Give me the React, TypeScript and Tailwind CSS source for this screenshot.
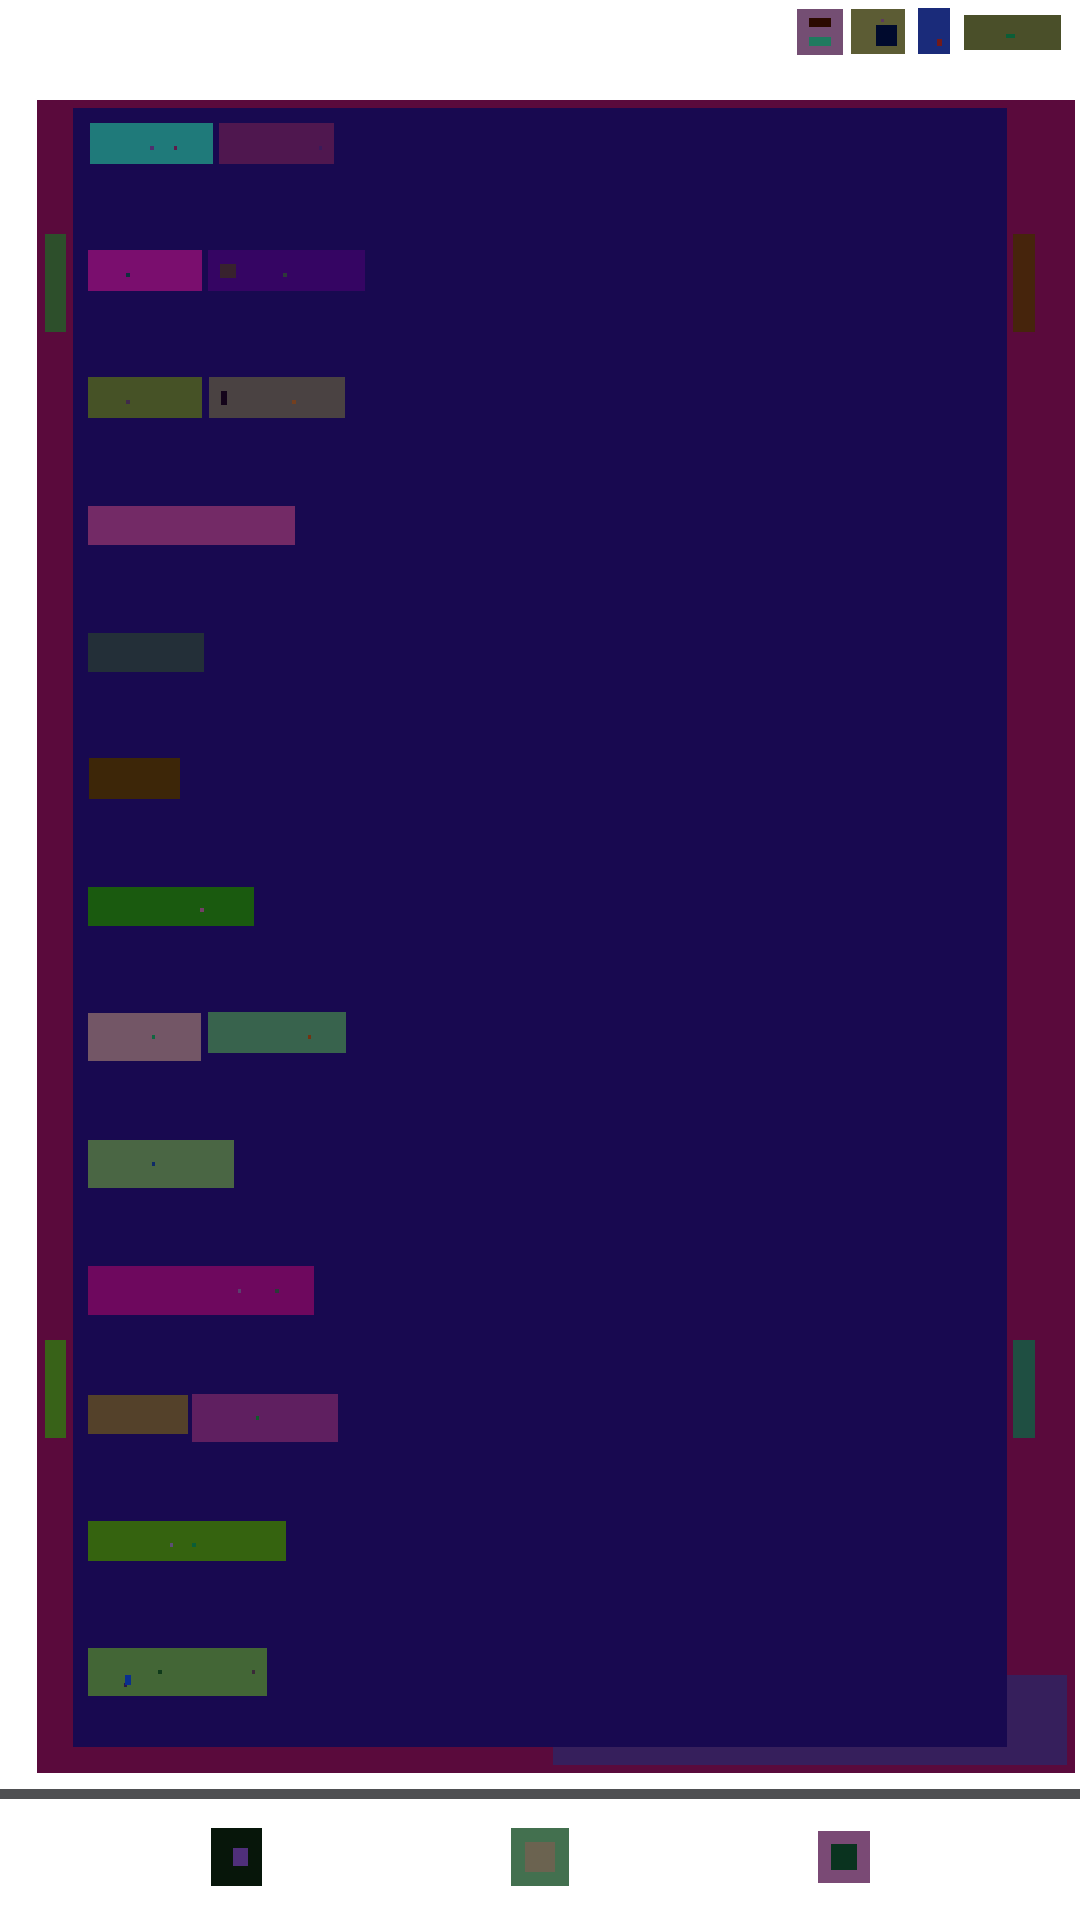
import type { ReactNode } from "react";

type BoxProps = {
  className: string;
  children?: ReactNode;
};

// a flat colour block, dots and inner blocks sit on top of it
const Box = ({ className, children }: BoxProps) => (
  <div className={`relative shrink-0 ${className}`}>{children}</div>
);

const Dot = ({ className }: { className: string }) => (
  <span className={`absolute ${className}`} />
);

const Header = () => (
  <header className="h-[100px] shrink-0 flex items-start pl-[797px]">
    <Box className="mt-[9px] w-[46px] h-[46px] bg-[#744e73]">
      <Dot className="left-[12px] top-[9px] w-[22px] h-[9px] bg-[#2b0a00]" />
      <Dot className="left-[12px] top-[28px] w-[22px] h-[9px] bg-[#1f7a5f]" />
    </Box>
    <Box className="ml-[8px] mt-[9px] w-[54px] h-[45px] bg-[#5c5c34]">
      <Dot className="left-[30px] top-[10px] w-[3px] h-[3px] bg-[#5c3a5e]" />
      <Dot className="left-[25px] top-[16px] w-[21px] h-[21px] bg-[#000a2d]" />
    </Box>
    <Box className="ml-[13px] mt-[8px] w-[32px] h-[46px] bg-[#1a2b7a]">
      <Dot className="left-[19px] top-[31px] w-[5px] h-[7px] bg-[#731a1a]" />
    </Box>
    <Box className="ml-[14px] mt-[15px] w-[97px] h-[35px] bg-[#4a4f29]">
      <Dot className="left-[42px] top-[19px] w-[9px] h-[4px] bg-[#0b5e37]" />
    </Box>
  </header>
);

const Rail = ({ top, bottom, width }: { top: string; bottom: string; width: string }) => (
  <div className={`flex flex-col pt-[134px] gap-[1008px] ${width}`}>
    <div className={`h-[98px] ${top}`} />
    <div className={`h-[98px] ${bottom}`} />
  </div>
);

const Panel = () => (
  <section className="relative z-10 w-[934px] h-[1639px] mt-[8px] shrink-0 bg-[#180950] pl-[15px] flex flex-col">
    <div className="h-[127px] flex items-start">
      <Box className="ml-[2px] mt-[15px] w-[123px] h-[41px] bg-[#1f7a7a]">
        <Dot className="left-[60px] top-[23px] w-[4px] h-[4px] bg-[#4f2f6e]" />
        <Dot className="left-[84px] top-[23px] w-[3px] h-[4px] bg-[#5e1a4a]" />
      </Box>
      <Box className="ml-[6px] mt-[15px] w-[115px] h-[41px] bg-[#4f174f]">
        <Dot className="left-[100px] top-[23px] w-[3px] h-[4px] bg-[#3a1a5a]" />
      </Box>
    </div>
    <div className="h-[127px] flex items-start">
      <Box className="mt-[15px] w-[114px] h-[41px] bg-[#7a0e6e]">
        <Dot className="left-[38px] top-[23px] w-[4px] h-[4px] bg-[#0f2f3f]" />
      </Box>
      <Box className="ml-[6px] mt-[15px] w-[157px] h-[41px] bg-[#350563]">
        <Dot className="left-[12px] top-[14px] w-[16px] h-[14px] bg-[#38222e]" />
        <Dot className="left-[75px] top-[23px] w-[4px] h-[4px] bg-[#2e3a3a]" />
      </Box>
    </div>
    <div className="h-[129px] flex items-start">
      <Box className="mt-[15px] w-[114px] h-[41px] bg-[#465226]">
        <Dot className="left-[38px] top-[23px] w-[4px] h-[4px] bg-[#3f2a4a]" />
      </Box>
      <Box className="ml-[7px] mt-[15px] w-[136px] h-[41px] bg-[#4a4242]">
        <Dot className="left-[12px] top-[14px] w-[6px] h-[14px] bg-[#14041a]" />
        <Dot className="left-[83px] top-[23px] w-[4px] h-[4px] bg-[#733f1f]" />
      </Box>
    </div>
    <div className="h-[127px] flex items-start">
      <Box className="mt-[15px] w-[207px] h-[39px] bg-[#732a66]" />
    </div>
    <div className="h-[125px] flex items-start">
      <Box className="mt-[15px] w-[116px] h-[39px] bg-[#232f38]" />
    </div>
    <div className="h-[129px] flex items-start">
      <Box className="ml-[1px] mt-[15px] w-[91px] h-[41px] bg-[#3d2608]" />
    </div>
    <div className="h-[125px] flex items-start">
      <Box className="mt-[15px] w-[166px] h-[39px] bg-[#1a5a0f]">
        <Dot className="left-[112px] top-[21px] w-[4px] h-[4px] bg-[#733f66]" />
      </Box>
    </div>
    <div className="h-[128px] flex items-start">
      <Box className="mt-[16px] w-[113px] h-[48px] bg-[#735666]">
        <Dot className="left-[64px] top-[22px] w-[3px] h-[4px] bg-[#0f6640]" />
      </Box>
      <Box className="ml-[7px] mt-[15px] w-[138px] h-[41px] bg-[#38634d]">
        <Dot className="left-[100px] top-[23px] w-[3px] h-[4px] bg-[#733311]" />
      </Box>
    </div>
    <div className="h-[126px] flex items-start">
      <Box className="mt-[15px] w-[146px] h-[48px] bg-[#4a6644]">
        <Dot className="left-[64px] top-[22px] w-[3px] h-[4px] bg-[#0f2a66]" />
      </Box>
    </div>
    <div className="h-[128px] flex items-start">
      <Box className="mt-[15px] w-[226px] h-[49px] bg-[#6e085e]">
        <Dot className="left-[150px] top-[23px] w-[3px] h-[4px] bg-[#5c3f6e]" />
        <Dot className="left-[187px] top-[23px] w-[4px] h-[4px] bg-[#2a3a38]" />
      </Box>
    </div>
    <div className="h-[127px] flex items-start">
      <Box className="mt-[16px] w-[100px] h-[39px] bg-[#54412a]" />
      <Box className="ml-[4px] mt-[15px] w-[146px] h-[48px] bg-[#5f1f60]">
        <Dot className="left-[64px] top-[22px] w-[3px] h-[4px] bg-[#0f5a2a]" />
      </Box>
    </div>
    <div className="h-[127px] flex items-start">
      <Box className="mt-[15px] w-[198px] h-[40px] bg-[#35630f]">
        <Dot className="left-[82px] top-[22px] w-[3px] h-[4px] bg-[#5c4f73]" />
        <Dot className="left-[104px] top-[22px] w-[4px] h-[4px] bg-[#0a5e37]" />
      </Box>
    </div>
    <div className="flex items-start">
      <Box className="mt-[15px] w-[179px] h-[48px] bg-[#436636]">
        <Dot className="left-[36px] top-[35px] w-[3px] h-[4px] bg-[#2a1a4a]" />
        <Dot className="left-[37px] top-[27px] w-[6px] h-[10px] bg-[#0a2f8f]" />
        <Dot className="left-[70px] top-[22px] w-[4px] h-[4px] bg-[#0f3a1a]" />
        <Dot className="left-[164px] top-[22px] w-[3px] h-[4px] bg-[#3a2a38]" />
      </Box>
    </div>
  </section>
);

const Footer = () => (
  <footer className="flex-1 flex items-start mt-[29px]">
    <Box className="ml-[211px] w-[51px] h-[58px] bg-[#07160a]">
      <Dot className="left-[22px] top-[20px] w-[15px] h-[18px] bg-[#4f2f7a]" />
    </Box>
    <Box className="ml-[249px] w-[58px] h-[58px] bg-[#43704f]">
      <Dot className="left-[14px] top-[14px] w-[30px] h-[30px] bg-[#6b6350]" />
    </Box>
    <Box className="ml-[249px] mt-[3px] w-[52px] h-[52px] bg-[#7a4a75]">
      <Dot className="left-[13px] top-[13px] w-[26px] h-[26px] bg-[#0a331f]" />
    </Box>
  </footer>
);

export default function App() {
  return (
    <div className="w-[1080px] h-[1920px] bg-white flex flex-col overflow-hidden">
      <Header />
      <main className="relative ml-[37px] w-[1038px] h-[1673px] shrink-0 bg-[#5a0a3c] flex">
        <Rail width="w-[36px] pl-[8px] [&>div]:w-[21px]" top="bg-[#2d4f2b]" bottom="bg-[#386218]" />
        <Panel />
        <Rail width="w-[68px] pl-[6px] [&>div]:w-[22px]" top="bg-[#46240c]" bottom="bg-[#1f4f42]" />
        <div className="absolute left-[516px] top-[1575px] w-[514px] h-[90px] bg-[#361f5c]" />
      </main>
      <div className="h-[10px] mt-[16px] shrink-0 bg-[#4f5052]" />
      <Footer />
    </div>
  );
}
